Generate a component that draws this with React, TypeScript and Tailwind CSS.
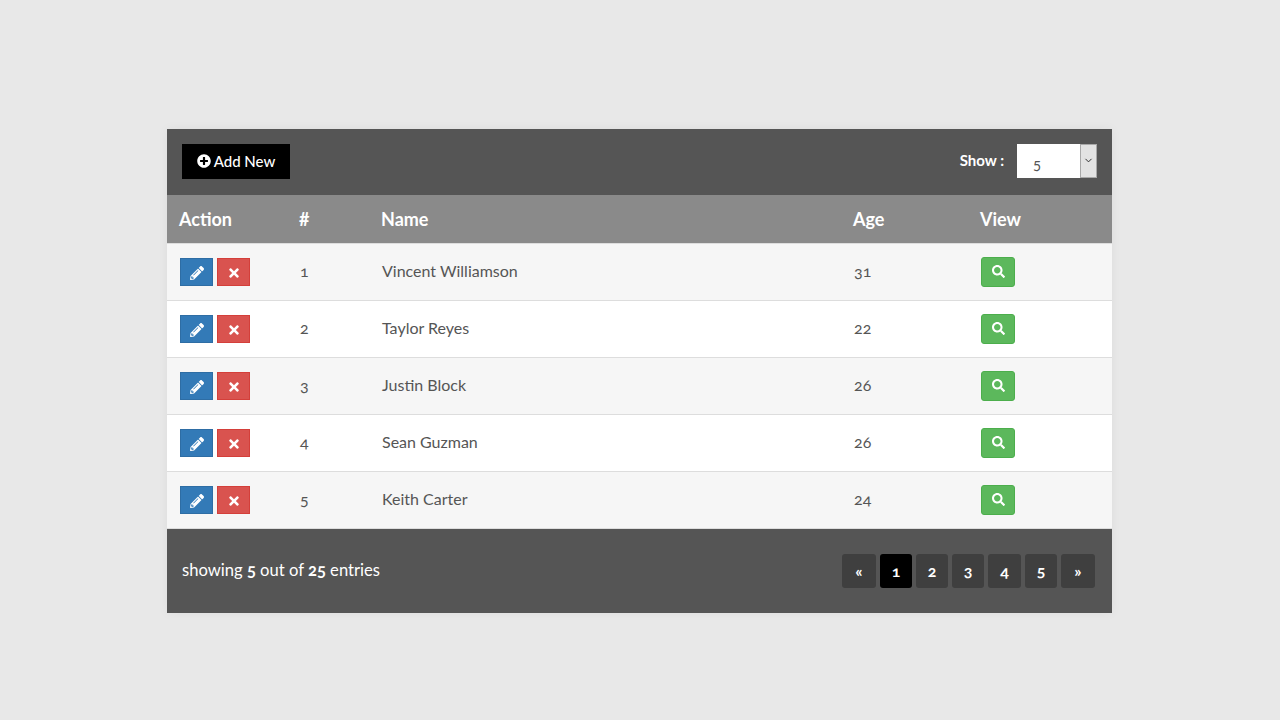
import { FaPencilAlt, FaPlusCircle, FaSearch, FaTimes } from "react-icons/fa";
import { LuChevronDown } from "react-icons/lu";

type Person = { id: number; name: string; age: number };

const people: Person[] = [
  { id: 1, name: "Vincent Williamson", age: 31 },
  { id: 2, name: "Taylor Reyes", age: 22 },
  { id: 3, name: "Justin Block", age: 26 },
  { id: 4, name: "Sean Guzman", age: 26 },
  { id: 5, name: "Keith Carter", age: 24 },
];

const pages = [
  { label: "«", width: "w-[34px]" },
  { label: "1", width: "w-[32px]" },
  { label: "2", width: "w-[32px]" },
  { label: "3", width: "w-[32px]" },
  { label: "4", width: "w-[33px]" },
  { label: "5", width: "w-[32px]" },
  { label: "»", width: "w-[34px]" },
];

function Row({ person, index }: { person: Person; index: number }) {
  return (
    <div
      className={`grid grid-cols-[120px_82px_472px_127px_1fr] items-center h-[57px] pl-[13px] border-b border-[#dddddd] text-[16px] leading-[24px] text-[#555555] ${
        index % 2 === 0 ? "bg-[#f6f6f6]" : "bg-white"
      }`}
    >
      <div className="flex gap-1">
        <button className="flex items-center justify-center w-[33px] h-[28px] pt-[2px] bg-[#337ab7] border border-[#2e6da4] text-white text-[14px]">
          <FaPencilAlt />
        </button>
        <button className="flex items-center justify-center w-[33px] h-[28px] pt-[2px] bg-[#d9534f] border border-[#d43f3a] text-white text-[14px]">
          <FaTimes />
        </button>
      </div>
      <div className="-mt-[2px] [font-variant-numeric:oldstyle-nums]">{person.id}</div>
      <div className="-mt-[2px]">{person.name}</div>
      <div className="-mt-[2px] [font-variant-numeric:oldstyle-nums]">{person.age}</div>
      <div>
        <button className="flex items-center justify-center w-[34px] h-[30px] -mt-px pb-px bg-[#5cb85c] border border-[#4cae4c] rounded-[3px] text-white text-[13px]">
          <FaSearch />
        </button>
      </div>
    </div>
  );
}

export default function App() {
  return (
    <div className="min-h-[720px] bg-[#e8e8e8] pt-[129px] font-['Lato','Open_Sans',sans-serif]">
      <div className="w-[945px] ml-[167px] shadow-[0_0_10px_rgba(0,0,0,0.05)]">
        <div className="flex items-center justify-between h-[66px] pb-[2px] bg-[#555555] px-[15px]">
          <button className="flex items-center gap-[3px] w-[108px] h-[35px] justify-center bg-black text-white text-[15px] font-medium">
            <FaPlusCircle className="text-[14px]" />
            Add New
          </button>
          <div className="flex items-center">
            <span className="text-white text-[15px] font-bold mr-[13px] -mt-[2px]">Show :</span>
            <div className="flex w-[80px] h-[34px] bg-white">
              <span className="flex-1 pl-[16px] pt-[8px] text-[15px] text-[#555555] [font-variant-numeric:oldstyle-nums]">5</span>
              <span className="flex items-center justify-center w-[17px] pb-[2px] bg-[#e3e3e3] border border-[#a9a9a9] text-[#222222]">
                <LuChevronDown size={11} />
              </span>
            </div>
          </div>
        </div>

        <div className="grid grid-cols-[120px_82px_472px_127px_1fr] items-center h-[49px] pl-3 bg-[#8a8a8a] border-b border-[#dddddd] text-white text-[18px] font-bold">
          <div>Action</div>
          <div>#</div>
          <div>Name</div>
          <div>Age</div>
          <div>View</div>
        </div>

        {people.map((person, index) => (
          <Row key={person.id} person={person} index={index} />
        ))}

        <div className="flex items-center justify-between h-[84px] bg-[#555555] pl-[15px] pr-[17px]">
          <div className="-mt-[2px] text-white text-[16.6px] [font-variant-numeric:oldstyle-nums]">
            showing <b>5</b> out of <b>25</b> entries
          </div>
          <div className="flex gap-1">
            {pages.map((page) => (
              <button
                key={page.label}
                className={`flex items-center justify-center h-[34px] rounded-[3px] text-white text-[16px] font-bold [font-variant-numeric:oldstyle-nums] ${page.width} ${
                  page.label === "1" ? "bg-black" : "bg-[#3f3f3f]"
                }`}
              >
                {page.label}
              </button>
            ))}
          </div>
        </div>
      </div>
    </div>
  );
}
